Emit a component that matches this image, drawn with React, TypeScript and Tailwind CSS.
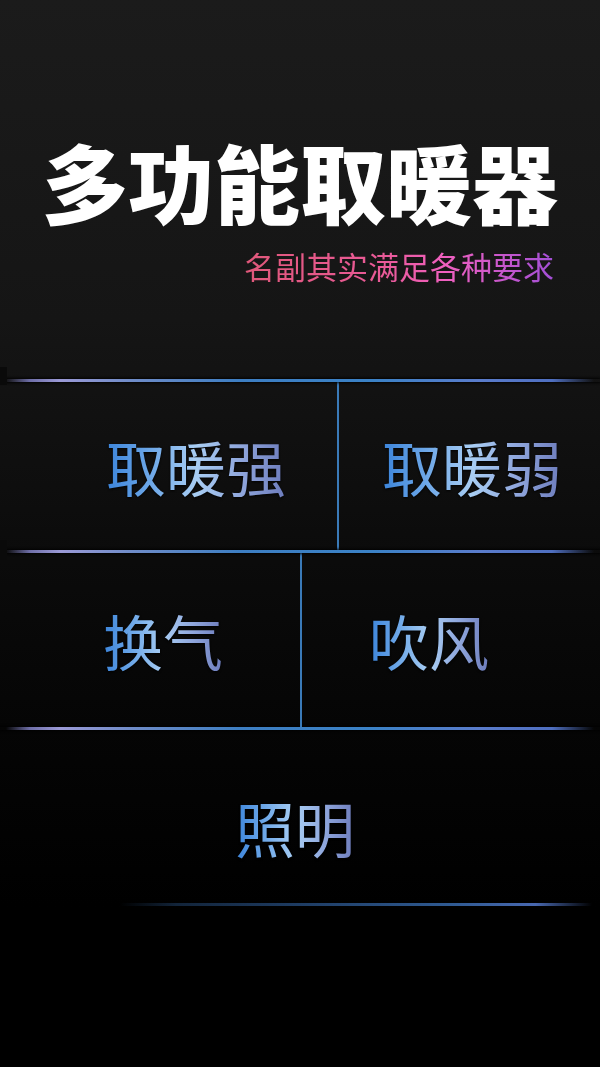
import React from 'react'

const glowLine =
  'h-[3px] w-full bg-[linear-gradient(90deg,transparent_1%,#6f6fa8_5%,#9b9ad6_10%,#6f8cc8_22%,#3d7ec2_40%,#3b82c6_62%,#5a7ccb_80%,#4f6fc0_92%,transparent_99%)] shadow-[0_0_3px_1px_rgba(0,0,0,0.9)]'

const label =
  "bg-[linear-gradient(90deg,#3b84da_0%,#6ea8e8_25%,#a8cdf3_50%,#8fa6dc_75%,#6d7cbc_100%)] bg-clip-text text-transparent text-[60px] leading-[70px] font-normal drop-shadow-[0_1px_1px_rgba(0,0,0,0.9)]"

function Cell({ text, className }: { text: string; className: string }) {
  return (
    <div className={`flex items-center ${className}`}>
      <span className={label}>{text}</span>
    </div>
  )
}

export default function App() {
  return (
    <div className="relative h-[1067px] w-full overflow-hidden bg-[linear-gradient(180deg,#1b1b1b_0%,#151515_30%,#0c0c0c_50%,#050505_68%,#000_85%)] font-['Noto_Sans_CJK_SC',sans-serif]">
      {/* Header */}
      <div className="pt-[133px]">
        <h1 className="text-center text-[86px] leading-[96px] font-black text-white">
          多功能取暖器
        </h1>
        <p className="mt-[19px] pr-[46px] text-right text-[31px] leading-[36px]">
          <span className="bg-[linear-gradient(90deg,#e0587a_0%,#ea5a98_45%,#f060c0_65%,#a24fd6_100%)] bg-clip-text text-transparent">
            名副其实满足各种要求
          </span>
        </p>
      </div>

      {/* Control grid */}
      <div className="mt-[95px]">
        <div className="relative">
          <div className="absolute left-0 top-[-12px] h-[18px] w-[7px] bg-[#0a0a0a]" />
          <div className={glowLine} />
        </div>
        <div className="flex h-[168px]">
          <Cell text="取暖强" className="w-[337px] pl-[106px]" />
          <div className="w-[2px] bg-[#3a7ab8]" />
          <Cell text="取暖弱" className="flex-1 pl-[43px]" />
        </div>
        <div className="relative">
          <div className="absolute left-0 top-[-10px] h-[20px] w-[7px] bg-[#0a0a0a]" />
          <div className={glowLine} />
        </div>
        <div className="flex h-[174px]">
          <Cell text="换气" className="w-[300px] pl-[103px]" />
          <div className="w-[2px] bg-[#3a7ab8]" />
          <Cell text="吹风" className="flex-1 pl-[67px]" />
        </div>
        <div className={glowLine} />
        <div className="flex h-[173px] items-center pl-[235px] pt-[20px]">
          <span className={label}>照明</span>
        </div>
        <div className="pl-[120px] pr-[8px]">
          <div className="h-[3px] w-full bg-[linear-gradient(90deg,transparent_0%,#12243a_12%,#1f3e66_40%,#2f5a92_70%,#4868b0_88%,transparent_100%)]" />
        </div>
      </div>
    </div>
  )
}
